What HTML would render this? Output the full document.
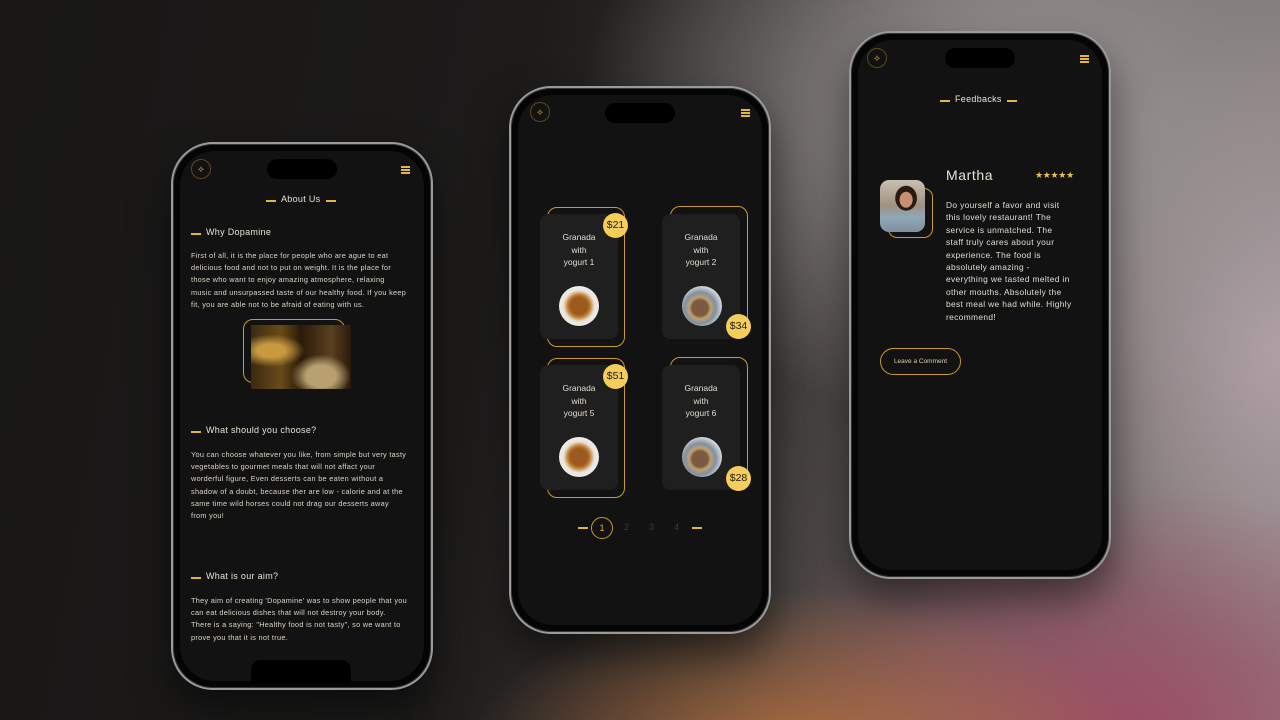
<!DOCTYPE html>
<html><head><meta charset="utf-8"><style>
*{margin:0;padding:0;box-sizing:border-box}
body{width:1280px;height:720px;overflow:hidden;position:relative;font-family:"Liberation Sans",sans-serif;
background:
radial-gradient(ellipse 480px 260px at 800px 770px, rgba(190,115,60,.9), rgba(190,115,60,0) 70%),
radial-gradient(ellipse 520px 330px at 1120px 730px, rgba(160,75,100,.95), rgba(160,75,100,0) 75%),
radial-gradient(ellipse 560px 420px at 1000px 110px, rgba(160,155,155,1), rgba(150,145,145,0) 75%),
radial-gradient(ellipse 300px 400px at 1280px 350px, rgba(175,160,165,1), rgba(170,155,160,0) 80%),
linear-gradient(100deg,#181716 0%,#1c1b1a 38%,#33302e 55%,#625c5a 75%,#8e8486 100%);}
.a{position:absolute}
.phone{position:absolute;width:262px;height:548px;border-radius:42px;background:#050505;border:2px solid #9a9a9a;box-shadow:0 20px 40px rgba(0,0,0,.5),inset 0 0 0 1px #333}
.scr{position:absolute;left:7px;top:7px;right:7px;bottom:7px;border-radius:35px;background:#121212;overflow:hidden}
.notch{position:absolute;width:70px;height:20px;border-radius:10px;background:#000}
.logo{position:absolute;width:20px;height:20px;border-radius:50%;border:1px solid #5a4a20;color:#d8a93a;font-size:9px;text-align:center;line-height:18px}
.ham{position:absolute;width:9px;height:2px;background:#e6b440;box-shadow:0 3px 0 #e6b440,0 6px 0 #e6b440}
.t{position:absolute;color:#e8e2d6;white-space:nowrap}
.dash{position:absolute;height:2px;width:10px;background:#e6b440}
.p{position:absolute;color:#ddd6c8;font-size:7.3px;line-height:12.2px;letter-spacing:.3px;white-space:nowrap}
.card{position:absolute;width:78px;height:125px;border-radius:8px;background:#1f1f1f}
.frame{position:absolute;width:78px;height:140px;border:1px solid #c99a2e;border-radius:10px}
.price{position:absolute;width:25px;height:25px;border-radius:50%;background:#f5cd5a;color:#1a1a1a;font-size:10.5px;text-align:center;line-height:25px}
.ct{position:absolute;width:78px;text-align:center;color:#e0dbd0;font-size:8.5px;line-height:12.6px}
.plate{position:absolute;width:40px;height:40px;border-radius:50%;background:radial-gradient(circle,#9a5a20 0 30%,#c08030 40%,#e8e4dc 55%,#f0ece6 70%)}
.plate2{position:absolute;width:40px;height:40px;border-radius:50%;background:radial-gradient(circle at 45% 55%,#7a5a40 0 25%,#c0a070 35%,#8090a0 50%,#d0d4d8 70%)}
</style></head><body>

<!-- Phone 1 -->
<div class="phone" style="left:171px;top:142px"><div class="scr"></div></div>
<div class="notch" style="left:267px;top:159px"></div>
<div class="logo" style="left:191px;top:159px">⟡</div>
<div class="ham" style="left:401px;top:166px"></div>
<div class="dash" style="left:266px;top:200px"></div><div class="t" style="left:281px;top:194px;font-size:9px;letter-spacing:.3px">About Us</div><div class="dash" style="left:326px;top:200px"></div>
<div class="dash" style="left:191px;top:233px"></div><div class="t" style="left:206px;top:227px;font-size:9px;letter-spacing:.3px">Why Dopamine</div>
<div class="p" style="left:191px;top:250px">First of all, it is the place for people who are ague to eat<br>delicious food and not to put on weight. It is the place for<br>those who want to enjoy amazing atmosphere, relaxing<br>music and unsurpassed taste of our healthy food. If you keep<br>fit, you are able not to be afraid of eating with us.</div>
<div class="a" style="left:243px;top:319px;width:102px;height:64px;border:1px solid #c99a2e;border-radius:10px"></div>
<div class="a" style="left:251px;top:325px;width:100px;height:64px;background:radial-gradient(ellipse at 70% 80%,#b8a070 0 15%,transparent 30%),radial-gradient(ellipse at 20% 40%,#c89a40 0 12%,transparent 30%),linear-gradient(90deg,#3a2a10,#6a4a18 30%,#2a1a08 50%,#5a4020 80%,#2a1a0a)"></div>
<div class="dash" style="left:191px;top:431px"></div><div class="t" style="left:206px;top:425px;font-size:9px;letter-spacing:.3px">What should you choose?</div>
<div class="p" style="left:191px;top:449px">You can choose whatever you like, from simple but very tasty<br>vegetables to gourmet meals that will not affact your<br>worderful figure, Even desserts can be eaten without a<br>shadow of a doubt, because ther are low - calorie and at the<br>same time wild horses could not drag our desserts away<br>from you!</div>
<div class="dash" style="left:191px;top:577px"></div><div class="t" style="left:206px;top:571px;font-size:9px;letter-spacing:.3px">What is our aim?</div>
<div class="p" style="left:191px;top:595px">They aim of creating 'Dopamine' was to show people that you<br>can eat delicious dishes that will not destroy your body.<br>There is a saying: "Healthy food is not tasty", so we want to<br>prove you that it is not true.</div>
<div class="a" style="left:251px;top:660px;width:100px;height:24px;background:#000;border-radius:10px 10px 0 0"></div>

<!-- Phone 2 -->
<div class="phone" style="left:509px;top:86px"><div class="scr"></div></div>
<div class="notch" style="left:605px;top:103px"></div>
<div class="logo" style="left:530px;top:102px">⟡</div>
<div class="ham" style="left:741px;top:109px"></div>

<div class="frame" style="left:547px;top:207px"></div>
<div class="card" style="left:540px;top:214px"></div>
<div class="ct" style="left:540px;top:231px">Granada<br>with<br>yogurt 1</div>
<div class="plate" style="left:559px;top:286px"></div>
<div class="price" style="left:603px;top:213px">$21</div>

<div class="frame" style="left:670px;top:206px;height:131px"></div>
<div class="card" style="left:662px;top:214px"></div>
<div class="ct" style="left:662px;top:231px">Granada<br>with<br>yogurt 2</div>
<div class="plate2" style="left:682px;top:286px"></div>
<div class="price" style="left:726px;top:314px">$34</div>

<div class="frame" style="left:547px;top:358px"></div>
<div class="card" style="left:540px;top:365px"></div>
<div class="ct" style="left:540px;top:382px">Granada<br>with<br>yogurt 5</div>
<div class="plate" style="left:559px;top:437px"></div>
<div class="price" style="left:603px;top:364px">$51</div>

<div class="frame" style="left:670px;top:357px;height:131px"></div>
<div class="card" style="left:662px;top:365px"></div>
<div class="ct" style="left:662px;top:382px">Granada<br>with<br>yogurt 6</div>
<div class="plate2" style="left:682px;top:437px"></div>
<div class="price" style="left:726px;top:466px">$28</div>

<div class="dash" style="left:578px;top:527px"></div>
<div class="a" style="left:591px;top:517px;width:22px;height:22px;border:1px solid #c99a2e;border-radius:50%;color:#e6b440;font-size:9px;text-align:center;line-height:20px">1</div>
<div class="t" style="left:624px;top:522px;font-size:9px;color:#3a3a3a">2</div>
<div class="t" style="left:649px;top:522px;font-size:9px;color:#3a3a3a">3</div>
<div class="t" style="left:674px;top:522px;font-size:9px;color:#3a3a3a">4</div>
<div class="dash" style="left:692px;top:527px"></div>

<!-- Phone 3 -->
<div class="phone" style="left:849px;top:31px"><div class="scr"></div></div>
<div class="notch" style="left:945px;top:48px"></div>
<div class="logo" style="left:867px;top:48px">⟡</div>
<div class="ham" style="left:1080px;top:55px"></div>
<div class="dash" style="left:940px;top:100px"></div><div class="t" style="left:955px;top:94px;font-size:9px;letter-spacing:.3px">Feedbacks</div><div class="dash" style="left:1007px;top:100px"></div>
<div class="a" style="left:888px;top:188px;width:45px;height:50px;border:1px solid #c99a2e;border-radius:9px"></div>
<div class="a" style="left:880px;top:180px;width:45px;height:52px;border-radius:9px;background:radial-gradient(ellipse 9px 11px at 58% 38%,#c89070 0 70%,transparent 75%),radial-gradient(ellipse 14px 16px at 58% 35%,#2a1a14 0 75%,transparent 80%),linear-gradient(180deg,#c8c0b0 0,#a09080 50%,#90a8b8 70%,#8090a0)"></div>
<div class="t" style="left:946px;top:167px;font-size:14px;letter-spacing:.6px">Martha</div>
<div class="t" style="left:1035px;top:170px;font-size:9px;color:#f0c050;letter-spacing:-0.3px">★★★★★</div>
<div class="p" style="left:946px;top:199px;font-size:8.4px;line-height:12.4px;letter-spacing:.35px;color:#e2ddd2">Do yourself a favor and visit<br>this lovely restaurant! The<br>service is unmatched. The<br>staff truly cares about your<br>experience. The food is<br>absolutely amazing -<br>everything we tasted melted in<br>other mouths. Absolutely the<br>best meal we had while. Highly<br>recommend!</div>
<div class="a" style="left:880px;top:348px;width:81px;height:27px;border:1px solid #c99a2e;border-radius:14px;color:#e0d0b0;font-size:6.5px;text-align:center;line-height:25px">Leave a Comment</div>
</body></html>
